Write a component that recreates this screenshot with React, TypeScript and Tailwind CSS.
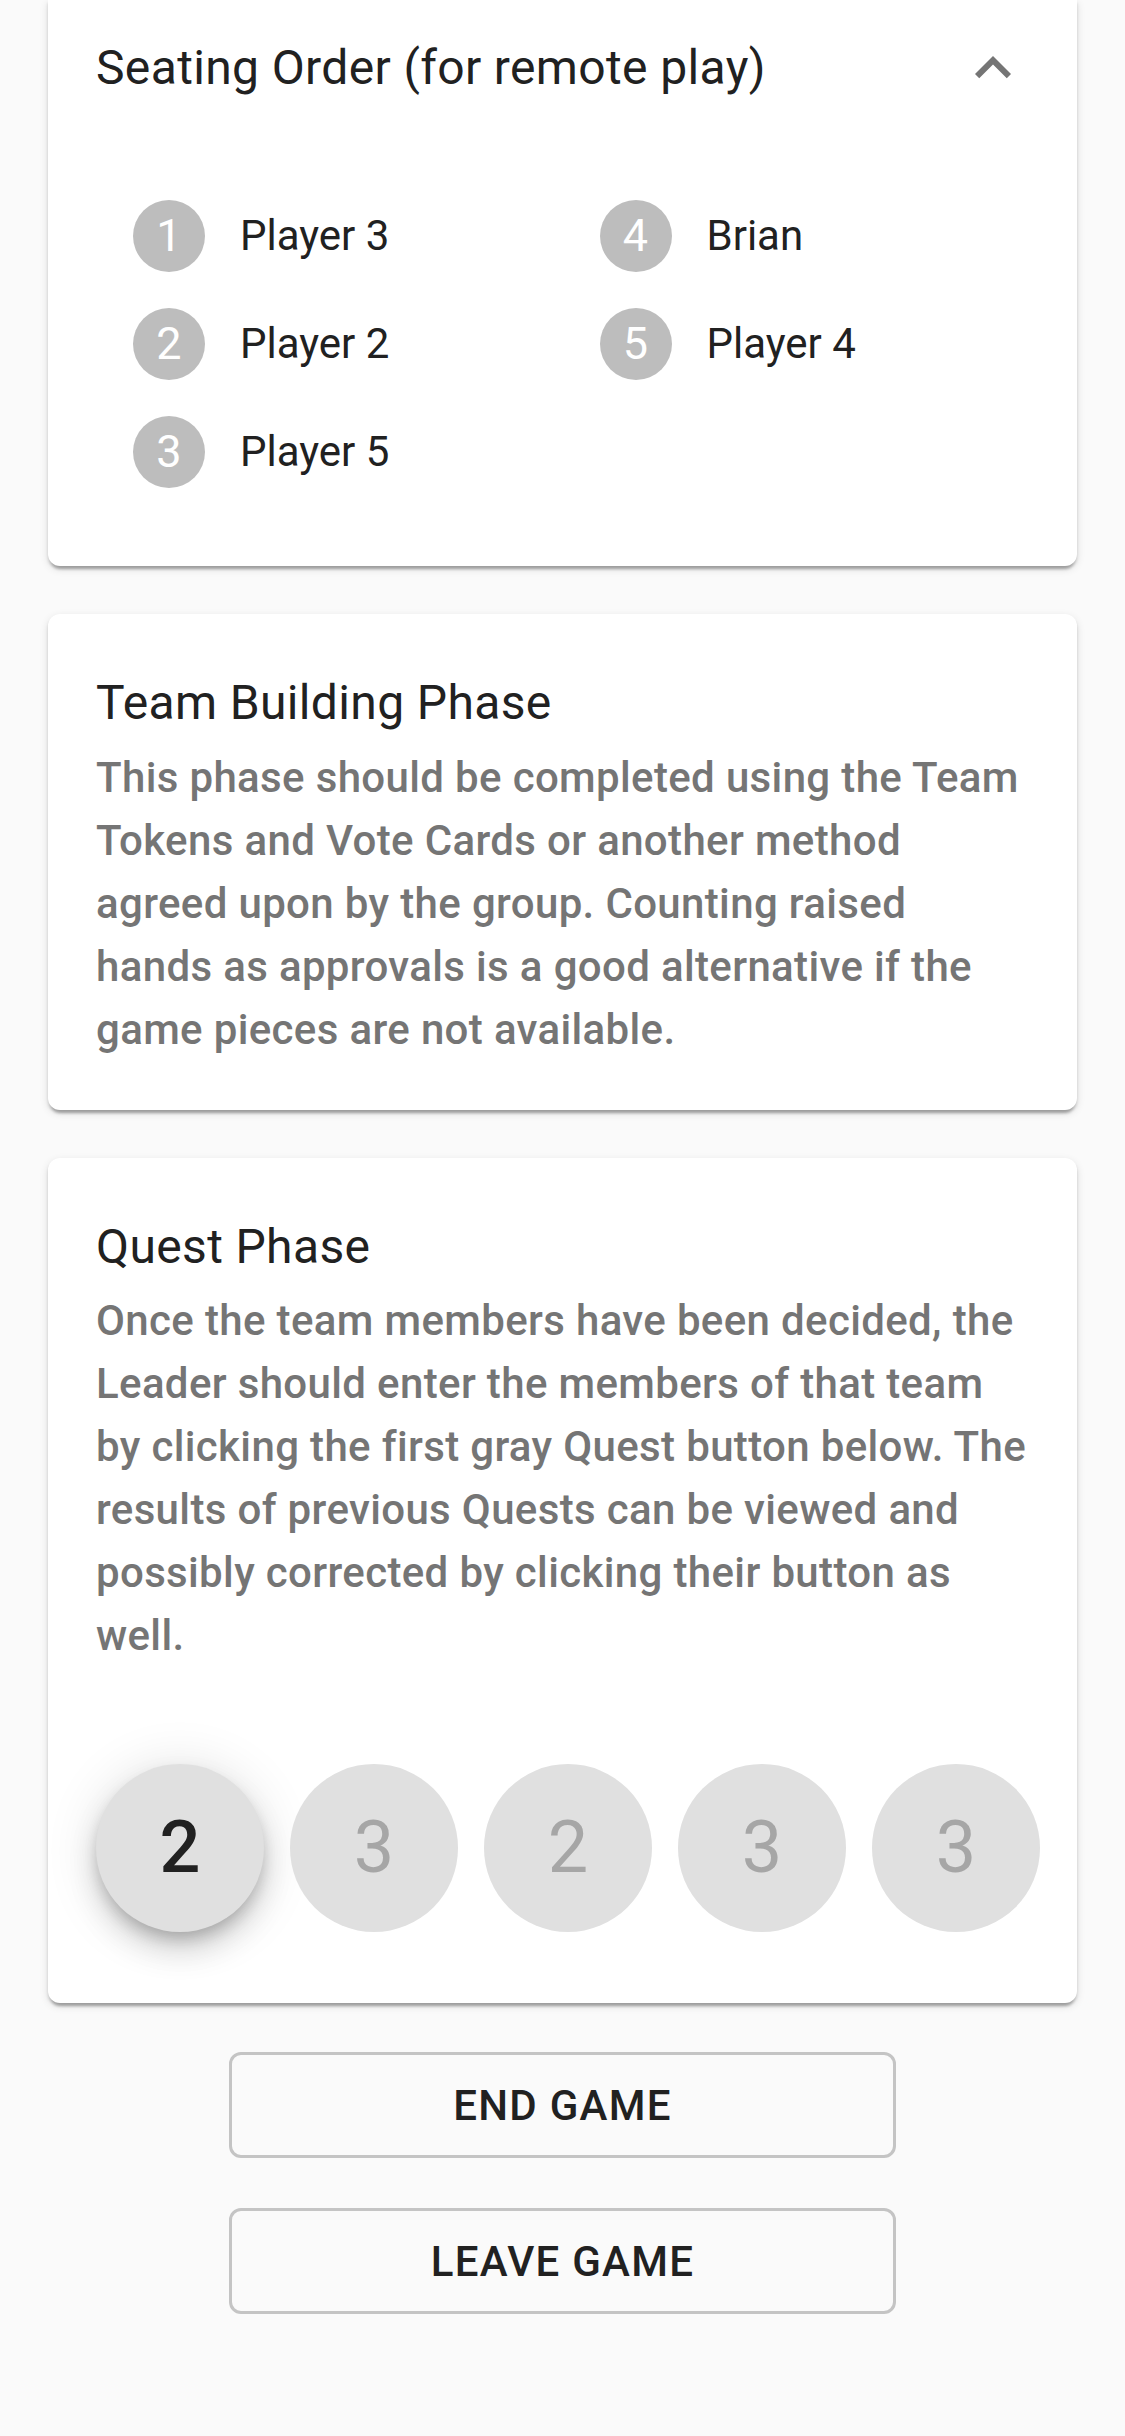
import React from "react";

const seats = [
  { n: 1, name: "Player 3" },
  { n: 2, name: "Player 2" },
  { n: 3, name: "Player 5" },
  { n: 4, name: "Brian" },
  { n: 5, name: "Player 4" },
];

const quests = [
  { size: 2, active: true },
  { size: 3, active: false },
  { size: 2, active: false },
  { size: 3, active: false },
  { size: 3, active: false },
];

const cardShadow =
  "shadow-[0_6px_3px_-3px_rgba(0,0,0,0.2),0_3px_3px_0_rgba(0,0,0,0.14),0_3px_9px_0_rgba(0,0,0,0.12)]";

function PhaseCard({ title, children }: { title: string; children: React.ReactNode }) {
  return (
    <div className={`mt-12 bg-white rounded-[12px] px-12 pt-[51px] pb-[49px] ${cardShadow}`}>
      <h2 className="text-[48px] leading-[1.6] tracking-[0.0075em] text-[#212121]">{title}</h2>
      {children}
    </div>
  );
}

export default function App() {
  return (
    <div className="min-h-screen bg-[#fafafa] px-12 pb-24 font-['Roboto',sans-serif]">
      {/* seating order (accordion, expanded) */}
      <div className={`bg-white rounded-b-[12px] ${cardShadow}`}>
        <div className="flex items-center justify-between px-12 pt-[30px]">
          <h2 className="text-[48px] leading-[1.6] tracking-[0.0075em] text-[#212121]">
            Seating Order (for remote play)
          </h2>
          <svg viewBox="0 0 24 24" className="w-[72px] h-[72px] fill-[#757575]">
            <path d="M12 8l-6 6 1.41 1.41L12 10.83l4.59 4.58L18 14z" />
          </svg>
        </div>
        <div className="mt-[75px] px-12 pb-[60px] grid grid-cols-2 grid-rows-3 grid-flow-col">
          {seats.map((s) => (
            <div key={s.n} className="h-[108px] flex items-center pl-[37px]">
              <div className="w-[72px] h-[72px] rounded-full bg-[#bdbdbd] text-white text-[45px] flex items-center justify-center shrink-0">
                {s.n}
              </div>
              <span className="ml-[35px] text-[42px] text-[#212121]">{s.name}</span>
            </div>
          ))}
        </div>
      </div>

      <PhaseCard title="Team Building Phase">
        <p className="mt-[4px] text-[42px] leading-[63px] font-medium tracking-[0.35px] text-[#757575]">
          This phase should be completed using the Team Tokens and Vote Cards or another method
          agreed upon by the group. Counting raised hands as approvals is a good alternative if the
          game pieces are not available.
        </p>
      </PhaseCard>

      <PhaseCard title="Quest Phase">
        <p className="mt-[4px] text-[42px] leading-[63px] font-medium tracking-[0.35px] text-[#757575]">
          Once the team members have been decided, the Leader should enter the members of that team
          by clicking the first gray Quest button below. The results of previous Quests can be viewed
          and possibly corrected by clicking their button as well.
        </p>
        <div className="mt-[97px] mb-[22px] flex gap-[26px]">
          {quests.map((q, i) => (
            <button
              key={i}
              className={
                q.active
                  ? "w-[168px] h-[168px] shrink-0 rounded-full bg-[#e0e0e0] text-[#212121] text-[72px] font-medium flex items-center justify-center shadow-[0_9px_15px_-3px_rgba(0,0,0,0.2),0_18px_30px_0_rgba(0,0,0,0.14),0_3px_54px_0_rgba(0,0,0,0.12)]"
                  : "w-[168px] h-[168px] shrink-0 rounded-full bg-[#e0e0e0] text-[#a6a6a6] text-[72px] flex items-center justify-center"
              }
            >
              {q.size}
            </button>
          ))}
        </div>
      </PhaseCard>

      <div className="flex flex-col items-center">
        <button className="mt-[49px] w-[667px] h-[106px] border-[3px] border-[#c4c4c4] rounded-[12px] text-[42px] font-medium tracking-[0.03em] text-[#212121]">
          END GAME
        </button>
        <button className="mt-[50px] w-[667px] h-[106px] border-[3px] border-[#c4c4c4] rounded-[12px] text-[42px] font-medium tracking-[0.03em] text-[#212121]">
          LEAVE GAME
        </button>
      </div>
    </div>
  );
}
